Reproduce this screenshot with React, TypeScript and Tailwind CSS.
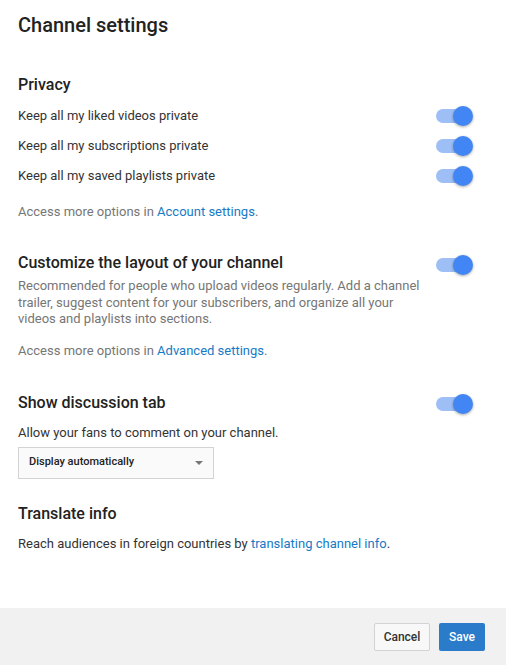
import type { ReactNode } from 'react';

function Toggle() {
  return (
    <span className="relative block h-[20px] w-[37px] shrink-0">
      <span className="absolute left-0 top-[3px] h-[14px] w-[34px] rounded-full bg-[#9dbff6]" />
      <span className="absolute right-0 top-0 h-[20px] w-[20px] rounded-full bg-[#4285f4] shadow-[0_1px_3px_rgba(0,0,0,0.35)]" />
    </span>
  );
}

function Link({ children }: { children: ReactNode }) {
  return <a className="text-[#167ac6]">{children}</a>;
}

function Heading({ children }: { children: ReactNode }) {
  return <h2 className="text-[16px] font-medium leading-[24px] text-[#222]">{children}</h2>;
}

const privacy = [
  'Keep all my liked videos private',
  'Keep all my subscriptions private',
  'Keep all my saved playlists private',
];

export default function App() {
  return (
    <div className="flex min-h-screen h-[665px] flex-col bg-white font-['Roboto',sans-serif] text-[13px] text-[#333]">
      <div className="flex-1 pl-[18px] pr-[33px] pt-[11px]">
        <h1 className="text-[20px] font-medium leading-[28px] text-[#222]">Channel settings</h1>

        <div className="mt-[34px]">
          <Heading>Privacy</Heading>
          <div className="mt-[4px]">
            {privacy.map((label) => (
              <div key={label} className="flex h-[30px] items-center justify-between">
                <span>{label}</span>
                <Toggle />
              </div>
            ))}
          </div>
          <p className="mt-[11px] leading-[20px] text-[#767676]">
            Access more options in <Link>Account settings</Link>.
          </p>
        </div>

        <div className="mt-[29px]">
          <div className="flex items-start justify-between">
            <div className="w-[408px]">
              <Heading>Customize the layout of your channel</Heading>
              <p className="mt-[3px] leading-[16.5px] text-[#767676]">
                Recommended for people who upload videos regularly. Add a channel trailer, suggest content for
                your subscribers, and organize all your videos and playlists into sections.
              </p>
            </div>
            <div className="mt-[4px] flex">
              <Toggle />
            </div>
          </div>
          <p className="mt-[13px] leading-[20px] text-[#767676]">
            Access more options in <Link>Advanced settings</Link>.
          </p>
        </div>

        <div className="mt-[30px]">
          <div className="flex h-[24px] items-center justify-between">
            <Heading>Show discussion tab</Heading>
            <div className="mt-[3px] flex">
              <Toggle />
            </div>
          </div>
          <p className="mt-[8px] leading-[20px]">Allow your fans to comment on your channel.</p>
          <div className="mt-[4px] flex h-[32px] w-[196px] items-center justify-between border border-[#d3d3d3] bg-[#fafafa] px-[10px]">
            <span className="text-[11px] font-medium text-[#222]">Display automatically</span>
            <span className="h-0 w-0 border-x-[4px] border-t-[4px] border-x-transparent border-t-[#777]" />
          </div>
        </div>

        <div className="mt-[23px]">
          <Heading>Translate info</Heading>
          <p className="mt-[8px] leading-[20px]">
            Reach audiences in foreign countries by <Link>translating channel info</Link>.
          </p>
        </div>
      </div>

      <div className="flex h-[57px] items-start justify-end gap-[9px] bg-[#f1f1f1] pr-[21px] pt-[15px]">
        <button className="h-[28px] w-[56px] rounded-[2px] border border-[#d3d3d3] bg-[#f8f8f8] text-[12px] font-medium text-[#333]">
          Cancel
        </button>
        <button className="h-[28px] w-[46px] rounded-[2px] bg-[#2b7bcb] text-[12px] font-medium text-white">
          Save
        </button>
      </div>
    </div>
  );
}
